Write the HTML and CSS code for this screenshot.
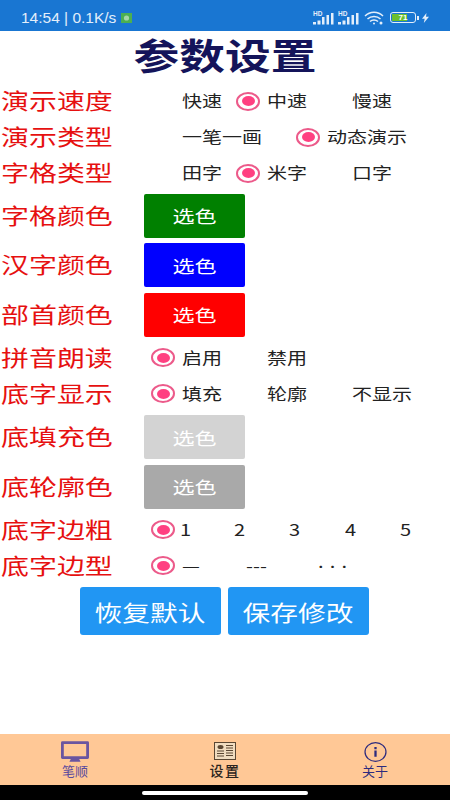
FILE: index.html
```html
<!DOCTYPE html>
<html lang="zh-CN">
<head>
  <meta charset="UTF-8">
  <meta name="viewport" content="width=device-width, initial-scale=1.0">
  <title>参数设置</title>
  <link rel="stylesheet" href="styles.css">
</head>
<body>
  <!-- Status bar -->
  <div class="status-bar">
    <div class="status-left">
      <span>14:54 | 0.1K/s</span>
      <svg class="status-app" width="11" height="10" viewBox="0 0 11 10"><rect width="11" height="10" fill="#4caf50"/><circle cx="5.5" cy="5" r="2.6" fill="#a5d6a7"/></svg>
    </div>
    <div class="status-right">
      <svg width="21" height="16" viewBox="0 0 21 16">
        <text x="0" y="6" class="hd">HD</text>
        <path d="M0 12h3v2.500H0zM4.500 10.500h3v4h-3zM9 7h2.500v7.500H9zM13.500 5H16v9.500h-2.500zM18 3h2.500v11.500H18z" fill="#e3eefa"/>
      </svg>
      <svg width="21" height="16" viewBox="0 0 21 16">
        <text x="0" y="6" class="hd">HD</text>
        <path d="M0 12h3v2.500H0zM4.500 10.500h3v4h-3zM9 7h2.500v7.500H9zM13.500 5H16v9.500h-2.500zM18 3h2.500v11.500H18z" fill="#e3eefa"/>
      </svg>
      <svg class="wifi" width="20" height="15" viewBox="0 0 20 15" fill="none" stroke="#e3eefa" stroke-width="1.500">
        <path d="M1 6c5-5 13-5 18 0M3.500 9c3.500-3.500 9.500-3.500 13 0M6 11.500c2.200-2 5.800-2 8 0"/>
        <circle cx="10" cy="13.500" r="1" fill="#e3eefa" stroke="none"/>
        <circle cx="17" cy="13" r="1.500" fill="#e3eefa" stroke="none"/>
      </svg>
      <div class="battery"><div class="battery-fill">71</div></div>
      <div class="battery-tip"></div>
      <svg class="bolt" width="7" height="10" viewBox="0 0 7 10"><path d="M4.500 0L0 5.800h2.700L1.800 10 7 3.800H4z" fill="#e3eefa"/></svg>
    </div>
  </div>

  <div class="content">
    <h1>参数设置</h1>

    <div class="row">
      <div class="label">演示速度</div>
      <div class="options">
        <div class="opt w85"><span class="slot"></span><span class="txt">快速</span></div>
        <div class="opt w85"><span class="slot"><i class="radio"></i></span><span class="txt">中速</span></div>
        <div class="opt w85"><span class="slot"></span><span class="txt">慢速</span></div>
      </div>
    </div>
    <div class="row">
      <div class="label">演示类型</div>
      <div class="options">
        <div class="opt w145"><span class="slot"></span><span class="txt">一笔一画</span></div>
        <div class="opt w85"><span class="slot"><i class="radio"></i></span><span class="txt">动态演示</span></div>
      </div>
    </div>
    <div class="row">
      <div class="label">字格类型</div>
      <div class="options">
        <div class="opt w85"><span class="slot"></span><span class="txt">田字</span></div>
        <div class="opt w85"><span class="slot"><i class="radio"></i></span><span class="txt">米字</span></div>
        <div class="opt w85"><span class="slot"></span><span class="txt">口字</span></div>
      </div>
    </div>

    <div class="row color-row">
      <div class="label">字格颜色</div>
      <button class="pick pick-green"><span>选色</span></button>
    </div>
    <div class="row color-row">
      <div class="label">汉字颜色</div>
      <button class="pick pick-blue"><span>选色</span></button>
    </div>
    <div class="row color-row">
      <div class="label">部首颜色</div>
      <button class="pick pick-red"><span>选色</span></button>
    </div>

    <div class="row">
      <div class="label">拼音朗读</div>
      <div class="options">
        <div class="opt w85"><span class="slot"><i class="radio"></i></span><span class="txt">启用</span></div>
        <div class="opt w85"><span class="slot"></span><span class="txt">禁用</span></div>
      </div>
    </div>
    <div class="row">
      <div class="label">底字显示</div>
      <div class="options">
        <div class="opt w85"><span class="slot"><i class="radio"></i></span><span class="txt">填充</span></div>
        <div class="opt w85"><span class="slot"></span><span class="txt">轮廓</span></div>
        <div class="opt w85"><span class="slot"></span><span class="txt">不显示</span></div>
      </div>
    </div>

    <div class="row color-row row-low">
      <div class="label">底填充色</div>
      <button class="pick pick-light"><span>选色</span></button>
    </div>
    <div class="row color-row">
      <div class="label">底轮廓色</div>
      <button class="pick pick-gray"><span>选色</span></button>
    </div>

    <div class="row">
      <div class="label">底字边粗</div>
      <div class="options">
        <div class="opt w55"><span class="slot slot-first"><i class="radio"></i></span><span class="txt">1</span></div>
        <div class="opt w55"><span class="slot slot-small"></span><span class="txt">2</span></div>
        <div class="opt w55"><span class="slot slot-small"></span><span class="txt">3</span></div>
        <div class="opt w55"><span class="slot slot-small"></span><span class="txt">4</span></div>
        <div class="opt w55"><span class="slot slot-small"></span><span class="txt">5</span></div>
      </div>
    </div>
    <div class="row">
      <div class="label">底字边型</div>
      <div class="options">
        <div class="opt w96"><span class="slot"><i class="radio"></i></span><span class="txt">—</span></div>
        <div class="opt w72"><span class="txt">---</span></div>
        <div class="opt w72"><span class="txt dots">...</span></div>
      </div>
    </div>

    <div class="actions">
      <button class="action"><span>恢复默认</span></button>
      <button class="action"><span>保存修改</span></button>
    </div>
  </div>

  <!-- Bottom tabs -->
  <div class="tabbar">
    <div class="tab tab-purple">
      <div class="tab-icon">
        <svg width="28" height="21" viewBox="0 0 30 22">
          <path d="M1.500 0h27A1.500 1.500 0 0 1 30 1.500v16a1.500 1.500 0 0 1-1.500 1.500h-27A1.500 1.500 0 0 1 0 17.500v-16A1.500 1.500 0 0 1 1.500 0zM3 3v13h24V3z" fill="#6a55a0" fill-rule="evenodd"/>
          <path d="M9 22l1.500-3h9l1.500 3z" fill="#6a55a0"/>
        </svg>
      </div>
      <span>笔顺</span>
    </div>
    <div class="tab tab-active">
      <div class="tab-icon">
        <svg class="news" width="22" height="18" viewBox="0 0 22 18">
          <rect x="0.500" y="0.500" width="21" height="17" fill="#f0dcc0" stroke="#5a4632"/>
          <ellipse cx="6.500" cy="5" rx="3" ry="2" fill="#5a4632"/>
          <path d="M3 9h7M3 11.500h7M3 14h7M12 3.500h7M12 6h7M12 8.500h7M12 11h7M12 13.500h7" stroke="#5a4632" stroke-width="1.200"/>
        </svg>
      </div>
      <span>设置</span>
    </div>
    <div class="tab tab-navy">
      <div class="tab-icon">
        <svg width="23" height="20" viewBox="0 0 24 21">
          <ellipse cx="12" cy="10.500" rx="11" ry="9.800" fill="none" stroke="#2d2a7e" stroke-width="1.300"/>
          <path d="M10.800 9h2.400v6.500h-2.400zM10.800 5.300h2.400v2.200h-2.400z" fill="#2d2a7e"/>
        </svg>
      </div>
      <span>关于</span>
    </div>
  </div>
  <div class="navbar"><div class="home-pill"></div></div>
</body>
</html>
```

FILE: styles.css
```css
* {
  box-sizing: border-box;
}
body {
  margin: 0;
  width: 450px;
  height: 800px;
  display: flex;
  flex-direction: column;
  overflow: hidden;
  background-color: #ffffff;
  font-family: "Noto Sans CJK SC", "Noto Sans", sans-serif;
}

/* status bar */
.status-bar {
  height: 31px;
  flex: none;
  display: flex;
  align-items: center;
  justify-content: space-between;
  padding: 4px 21px 0 21px;
  background-color: #1976d2;
  color: #e3eefa;
  font-family: "Liberation Sans", sans-serif;
  font-size: 15.500px;
}
.status-left {
  display: flex;
  align-items: center;
  gap: 5px;
}
.status-right {
  display: flex;
  align-items: center;
}
.status-right svg {
  margin-right: 4px;
}
.hd {
  font-family: "Liberation Sans", sans-serif;
  font-size: 6.500px;
  font-weight: bold;
  fill: #e3eefa;
}
.status-right .wifi {
  margin: 0 6px 0 1px;
}
.status-right .bolt {
  margin-right: 0;
}
.battery {
  width: 26px;
  height: 11px;
  padding: 1px;
  border: 1px solid #e3eefa;
  border-radius: 3px;
}
.battery-fill {
  width: 70%;
  height: 100%;
  background-color: #6abf2e;
  color: #ffffff;
  font-size: 8px;
  font-weight: bold;
  line-height: 7px;
  text-align: right;
}
.battery-tip {
  width: 2px;
  height: 4px;
  margin: 0 3px 0 1px;
  background-color: #e3eefa;
}

/* settings */
.content {
  flex: 1;
}
h1 {
  width: fit-content;
  height: 52px;
  margin: 0 auto;
  color: #14145a;
  font-size: 36px;
  font-weight: bold;
  line-height: 46px;
  transform: scaleX(1.27);
}
.row {
  display: flex;
  align-items: center;
  height: 36px;
  padding-left: 1px;
}
.row-low {
  margin-top: 1px;
}
.color-row {
  height: 49.500px;
}
.label {
  width: 143px;
  flex: none;
  padding-bottom: 4px;
  color: #e61010;
  font-size: 22px;
  transform: scaleX(1.27);
  transform-origin: left center;
  white-space: nowrap;
}
.options {
  display: flex;
  margin-left: 6px;
  color: #222222;
  font-size: 16px;
}
.txt {
  display: inline-block;
  margin-bottom: 2px;
  transform: scaleX(1.25);
  transform-origin: left center;
}
.dots {
  margin-bottom: 10px;
  letter-spacing: 5px;
}
.opt {
  display: flex;
  align-items: center;
  flex: none;
  white-space: nowrap;
}
.w55 {
  width: 55.500px;
}
.w72 {
  width: 72px;
}
.w85 {
  width: 85px;
}
.w96 {
  width: 96px;
}
.w145 {
  width: 145px;
}
.slot {
  width: 32px;
  flex: none;
  display: flex;
  align-items: center;
  padding-left: 1px;
  height: 24px;
}
.slot-small {
  width: 28px;
}
.slot-first {
  width: 30px;
}
.radio {
  width: 24px;
  height: 19px;
  flex: none;
  border: 2px solid #ec5a8a;
  border-radius: 50%;
  display: flex;
  align-items: center;
  justify-content: center;
}
.radio::after {
  content: "";
  width: 13px;
  height: 10px;
  border-radius: 50%;
  background-color: #ff4081;
}
button {
  font-family: "Noto Sans CJK SC", sans-serif;
  border: none;
  cursor: pointer;
  color: #ffffff;
}
button span {
  display: inline-block;
  transform: scaleX(1.26);
}
.pick {
  width: 101px;
  height: 44px;
  padding: 0;
  border-radius: 2px;
  font-size: 17.500px;
}
.pick-green {
  background-color: #008000;
}
.pick-blue {
  background-color: #0000ff;
}
.pick-red {
  background-color: #ff0000;
}
.pick-light {
  background-color: #d3d3d3;
}
.pick-gray {
  background-color: #a9a9a9;
}
.actions {
  display: flex;
  justify-content: center;
  gap: 7px;
  margin-top: 3px;
  padding-right: 1px;
}
.action {
  width: 141px;
  height: 48px;
  padding: 0;
  border-radius: 3px;
  background-color: #2196f3;
  font-size: 22px;
}

/* bottom tabs */
.tabbar {
  height: 51px;
  flex: none;
  display: flex;
  background-color: #ffc896;
}
.tab {
  flex: 1;
  display: flex;
  flex-direction: column;
  align-items: center;
  padding-top: 6px;
  font-size: 13px;
  line-height: 15px;
}
.tab-icon {
  height: 23px;
  display: flex;
  align-items: center;
}
.news {
  margin-bottom: 2px;
}
.tab-purple {
  color: #5a4a9e;
}
.tab-active {
  color: #2a2420;
  font-size: 14px;
  font-weight: 500;
  letter-spacing: 1.500px;
}
.tab-navy {
  color: #2d2a7e;
}
.navbar {
  height: 15px;
  flex: none;
  display: flex;
  justify-content: center;
  align-items: center;
  background-color: #000000;
}
.home-pill {
  width: 166px;
  height: 4px;
  border-radius: 2px;
  background-color: #ffffff;
}
```
